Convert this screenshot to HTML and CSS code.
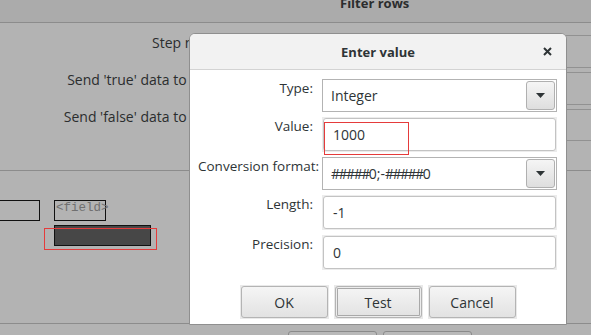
FILE: index.html
```html
<!DOCTYPE html>
<html lang="en">
<head>
    <meta charset="UTF-8">
    <title>Filter rows - Enter value</title>
    <link rel="stylesheet" href="styles.css">
</head>
<body>
    <div class="window">
        <header class="window-title"><span>Filter rows</span></header>

        <div class="step-form">
            <label class="step-label">Step name</label>
            <div class="bg-field"></div>
            <label class="step-label">Send 'true' data to step:</label>
            <div class="bg-field"></div>
            <label class="step-label">Send 'false' data to step:</label>
            <div class="bg-field"></div>
        </div>

        <div class="canvas">
            <div class="node node-left"></div>
            <div class="node node-field">&lt;field&gt;</div>
            <div class="node node-dark"></div>
            <div class="node node-mark"></div>
        </div>

        <div class="window-buttons">
            <span class="bg-btn"></span>
            <span class="bg-btn"></span>
        </div>
    </div>

    <div class="dialog">
        <div class="dialog-title">
            <span class="dialog-heading">Enter value</span>
            <button class="dialog-close" aria-label="Close">
                <svg width="9" height="9" viewBox="0 0 9 9"><path d="M1 1L8 8M8 1L1 8" stroke="#2e3436" stroke-width="2"/></svg>
            </button>
        </div>

        <div class="dialog-body">
            <label class="field-label">Type:</label>
            <div class="combo">
                <span class="combo-text">Integer</span>
                <span class="combo-btn"><svg width="9" height="5" viewBox="0 0 9 5"><path d="M0 0H9L4.5 5Z" fill="#2e3436"/></svg></span>
            </div>

            <label class="field-label">Value:</label>
            <div class="entry entry-marked">
                <div class="entry-box">1000</div>
                <div class="mark"></div>
            </div>

            <label class="field-label">Conversion format:</label>
            <div class="combo">
                <span class="combo-text"><span class="hashes">#####</span>0;-<span class="hashes">#####</span>0</span>
                <span class="combo-btn"><svg width="9" height="5" viewBox="0 0 9 5"><path d="M0 0H9L4.5 5Z" fill="#2e3436"/></svg></span>
            </div>

            <label class="field-label">Length:</label>
            <div class="entry"><div class="entry-box">-1</div></div>

            <label class="field-label">Precision:</label>
            <div class="entry"><div class="entry-box">0</div></div>
        </div>

        <div class="dialog-buttons">
            <div class="btn-frame"><button class="btn">OK</button></div>
            <div class="btn-frame"><button class="btn btn-default">Test</button></div>
            <div class="btn-frame"><button class="btn">Cancel</button></div>
        </div>
    </div>
</body>
</html>
```

FILE: styles.css
```css
* {
    margin: 0;
    padding: 0;
    box-sizing: border-box;
}

body {
    position: relative;
    width: 591px;
    height: 335px;
    overflow: hidden;
    background: #b3b3b3;
    font-family: 'Open Sans', 'Noto Sans', sans-serif;
    color: #2e3436;
}

/* dimmed window behind the dialog */
.window {
    color: #2b2d2e;
}

.window-title {
    height: 23px;
    background: #ababab;
    border-bottom: 1px solid #8c8c8c;
    padding-left: 340px;
    overflow: hidden;
}

.window-title span {
    display: block;
    font-size: 13px;
    font-weight: bold;
    line-height: 16px;
    margin-top: -5px;
}

.step-form {
    display: grid;
    grid-template-columns: 222px 1fr;
    grid-template-rows: 33px 33px 32px;
    column-gap: 12px;
    row-gap: 4px;
    padding: 12px 0 29px;
    border-bottom: 1px solid #8c8c8c;
}

.step-label {
    font-size: 14px;
    line-height: 18px;
    text-align: right;
    white-space: nowrap;
    align-self: start;
    margin-top: -1px;
}

.bg-field {
    border: 1px solid #919191;
    margin-right: -40px;
}

.canvas {
    position: relative;
    height: 153px;
    border-bottom: 1px solid #8c8c8c;
}

.node {
    position: absolute;
    border: 1px solid #111;
}

.node-left {
    left: -1px;
    top: 29px;
    width: 41px;
    height: 21px;
}

.node-field {
    left: 54px;
    top: 29px;
    width: 52px;
    height: 21px;
    font-family: 'Liberation Mono', monospace;
    font-size: 12.5px;
    line-height: 15px;
    color: #707070;
    padding-left: 1px;
    white-space: nowrap;
}

.node-dark {
    left: 54px;
    top: 54px;
    width: 97px;
    height: 21px;
    background: #474747;
}

.node-mark {
    left: 44px;
    top: 57px;
    width: 113px;
    height: 22px;
    border-color: #e53b3b;
}

.window-buttons {
    display: flex;
    gap: 6px;
    padding: 7px 0 0 288px;
}

.bg-btn {
    width: 89px;
    height: 20px;
    border: 1px solid #8a8a8a;
    border-radius: 3px;
    background: #b9b9b9;
}

/* dialog */
.dialog {
    position: absolute;
    left: 189px;
    top: 33px;
    width: 378px;
    height: 292px;
    background: #fff;
    border: 1px solid #8f8f8f;
    border-radius: 6px 6px 0 0;
    overflow: hidden;
}

.dialog-title {
    display: grid;
    grid-template-columns: 1fr auto 1fr;
    align-items: center;
    height: 36px;
    background: #f2f2f2;
    border-bottom: 1px solid #d3d3d3;
}

.dialog-heading {
    grid-column: 2;
    font-size: 13px;
    font-weight: bold;
}

.dialog-close {
    grid-column: 3;
    justify-self: end;
    margin-right: 14px;
    width: 9px;
    height: 9px;
    border: none;
    background: none;
    display: flex;
}

.dialog-body {
    display: grid;
    grid-template-columns: 115px 1fr;
    grid-template-rows: 33px 35px 33px 35px 35px;
    column-gap: 9px;
    row-gap: 5px;
    padding: 9px 9px 0 8px;
}

.field-label {
    font-size: 13.5px;
    line-height: 18px;
    text-align: right;
    white-space: nowrap;
    align-self: start;
}

.combo {
    display: flex;
    align-items: center;
    border: 1px solid #b3b3b3;
    padding: 1px;
    font-size: 14px;
}

.combo-text {
    flex: 1;
    padding-left: 7px;
    white-space: nowrap;
}

.hashes {
    letter-spacing: -1.5px;
}

.combo-btn {
    width: 29px;
    height: 100%;
    display: flex;
    align-items: center;
    justify-content: center;
    border: 1px solid #b0b0b0;
    border-radius: 3px;
    background: linear-gradient(#f5f5f5, #dedede);
}

.entry {
    position: relative;
    background: #ececec;
    padding: 1px;
}

.entry-box {
    height: 100%;
    border: 1px solid #c3c3c3;
    border-radius: 3px;
    background: #fff;
    padding-left: 9px;
    font-size: 14px;
    display: flex;
    align-items: center;
}

.mark {
    position: absolute;
    left: 2px;
    top: 5px;
    width: 85px;
    height: 33px;
    border: 1px solid #e53b3b;
}

.dialog-buttons {
    display: flex;
    justify-content: center;
    gap: 5px;
    margin-top: 15px;
}

.btn-frame {
    width: 89px;
    height: 34px;
    background: #e9e9e9;
    padding: 1px;
}

.btn {
    width: 100%;
    height: 100%;
    border: 1px solid #b4b4b4;
    border-radius: 3px;
    background: linear-gradient(#f5f5f5, #e2e2e2);
    font-family: 'Open Sans', 'Noto Sans', sans-serif;
    font-size: 14px;
    color: #2e3436;
}

.btn-default {
    box-shadow: inset 0 0 0 1px #ededed, inset 0 0 0 2px #a9a9a9;
}
```
